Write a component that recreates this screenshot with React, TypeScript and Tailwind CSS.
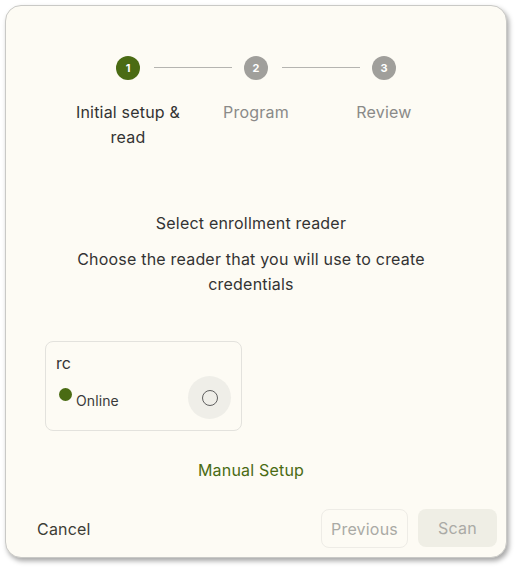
import { useState } from 'react';

const steps = [
  { n: 1, label: 'Initial setup & read' },
  { n: 2, label: 'Program' },
  { n: 3, label: 'Review' },
];

export default function App() {
  const [selected, setSelected] = useState(false);
  const active = 1;

  return (
    <div className="w-[519px] h-[571px] bg-white pt-[5px] pl-[5px]" style={{ fontFamily: 'Inter, "Noto Sans", sans-serif' }}>
      <div className="w-[502px] h-[553px] rounded-2xl border border-[#c9c9c6] bg-[#fdfbf4] shadow-[2px_3px_5px_rgba(0,0,0,0.35)] flex flex-col">
        {/* stepper */}
        <div className="mt-[50px] flex justify-center">
          {steps.map((s, i) => (
            <div key={s.n} className="w-32 flex flex-col items-center relative">
              {i < steps.length - 1 && (
                <div className="absolute top-[11px] left-[90px] w-[78px] h-px bg-[#b5b4b0]" />
              )}
              <div
                className={`w-6 h-6 rounded-full flex items-center justify-center text-[11px] font-bold text-white ${
                  s.n === active ? 'bg-[#4a6b13]' : 'bg-[#a09f9b]'
                }`}
              >
                {s.n}
              </div>
              <div
                className={`mt-[20px] text-center text-[16px] leading-[25px] px-1 tracking-[0.2px] ${
                  s.n === active ? 'text-[#333333]' : 'text-[#8a8a88]'
                }`}
              >
                {s.label}
              </div>
            </div>
          ))}
        </div>

        {/* body */}
        <div className="mt-[61px] text-center text-[16px] text-[#333333] pr-[10px] tracking-[0.2px]">
          <div className="leading-[25px]">Select enrollment reader</div>
          <div className="mt-[11px] leading-[25px] px-[56px]">
            Choose the reader that you will use to create credentials
          </div>
        </div>

        <div className="mt-[44px] ml-[39px]">
          <div className="w-[197px] h-[90px] rounded-lg border border-[#e3e2dd] px-[10px] pt-[11px]">
            <div className="text-[16px] leading-5 text-[#333333]">rc</div>
            <div className="flex items-center justify-between mt-[3px]">
              <div className="flex items-start">
                <span className="w-[13px] h-[13px] rounded-full bg-[#4a6b13] mt-[4px] ml-[3px]" />
                <span className="text-[14px] text-[#3a3a3a] mt-[7px] ml-[4px] leading-5 tracking-[0.1px]">Online</span>
              </div>
              <button
                onClick={() => setSelected(!selected)}
                className="w-[43px] h-[43px] rounded-full bg-[#efeee8] flex items-center justify-center"
              >
                <span className={`w-4 h-4 rounded-full border-[1.5px] border-[#5f5f5f] ${selected ? 'bg-[#4a6b13]' : ''}`} />
              </button>
            </div>
          </div>
        </div>

        <div className="mt-[27px] text-center pr-[10px]">
          <button className="text-[16px] text-[#4a6b13] leading-6 tracking-[0.2px]">Manual Setup</button>
        </div>

        {/* footer */}
        <div className="mt-auto mb-[9px] flex items-center justify-between pl-[31px] pr-[9px]">
          <button className="text-[16px] text-[#3d3d35] tracking-[0.2px]">Cancel</button>
          <div className="flex gap-[10px]">
            <button className="h-[39px] w-[87px] rounded-lg border border-[#eeece6] text-[16px] text-[#aaaaa5] tracking-[0.2px]">Previous</button>
            <button className="h-[38px] w-[79px] rounded-lg bg-[#efeee5] text-[16px] text-[#aaaaa5] tracking-[0.2px]">Scan</button>
          </div>
        </div>
      </div>
    </div>
  );
}
